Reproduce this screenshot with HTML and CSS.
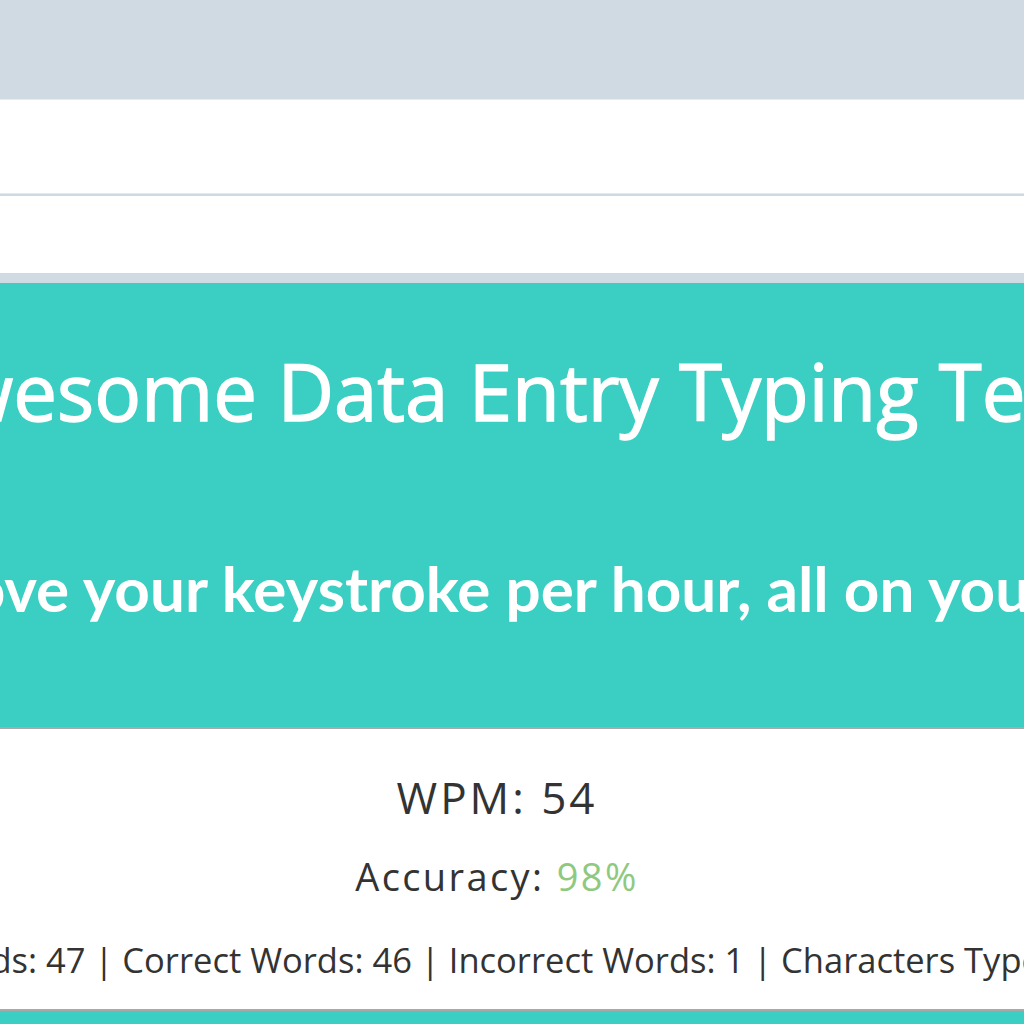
FILE: index.html
```html
<!DOCTYPE html>
<html lang="en">
<head>
<meta charset="utf-8">
<title>Awesome Data Entry Typing Test</title>
<link rel="stylesheet" href="styles.css">
</head>
<body>
  <header class="topbar"></header>
  <section class="panel">
    <div class="panel-row panel-row-first"></div>
    <div class="panel-divider"></div>
    <div class="panel-row panel-row-second"></div>
  </section>
  <div class="spacer"></div>
  <section class="hero">
    <div class="line title-line"><h1 class="title">Awesome Data Entry Typing Test</h1></div>
    <div class="line subtitle-line"><h3 class="subtitle">Improve your keystroke per hour, all on your own.</h3></div>
  </section>
  <section class="results">
    <div class="line"><p class="wpm">WPM: 54</p></div>
    <div class="line"><p class="accuracy">Accuracy: <span class="good">98%</span></p></div>
    <div class="line counts-line"><p class="counts">Total Words: 47 | Correct Words: 46 | Incorrect Words: 1 | Characters Typed: 262</p></div>
  </section>
  <footer class="footer"></footer>
</body>
</html>
```
FILE: styles.css
```css
html, body {
  margin: 0;
  padding: 0;
}
body {
  background: #ffffff;
  font-family: "Open Sans", "Liberation Sans", sans-serif;
  color: #333333;
  overflow: hidden;
  height: 1024px;
}
.topbar {
  height: 99px;
  background: #d0dae3;
  border-bottom: 1px solid #e6ecf1;
}
.panel {
  background: #ffffff;
}
.panel-row-first {
  height: 93px;
}
.panel-divider {
  height: 2px;
  border-top: 1px solid #e2e8ee;
  background: #d0dae3;
}
.panel-row-second {
  height: 77px;
}
.spacer {
  height: 10px;
  background: #d0dae3;
}
.line {
  display: flex;
  justify-content: center;
  padding-right: 30px;
  white-space: nowrap;
}
.hero {
  background: #3bcec3;
  box-sizing: border-box;
  padding-top: 62px;
  border-bottom: 2px solid #a9a9a9;
  height: 446px;
}
.title {
  margin: 0;
  font-weight: 400;
  font-size: 78px;
  line-height: 1.2;
  color: #ffffff;
  -webkit-text-stroke: 1.4px #ffffff;
}
.subtitle-line {
  margin-top: 112px;
  padding-right: 0;
  padding-left: 20px;
}
.subtitle {
  margin: 0;
  font-family: Lato, "Open Sans", sans-serif;
  font-weight: 700;
  font-size: 62px;
  line-height: 1.2;
  color: #ffffff;
}
.results {
  background: #ffffff;
  height: 282px;
  box-sizing: border-box;
  padding-top: 42px;
  border-bottom: 2px solid #a9a9a9;
}
.results p {
  margin: 0;
  line-height: 1.2;
}
.wpm {
  font-size: 44px;
  letter-spacing: 3px;
}
.accuracy {
  margin-top: 30px !important;
  font-size: 38px;
  letter-spacing: 2.4px;
}
.good {
  color: #8fc97f;
}
.counts-line {
  padding-right: 50px;
}
.counts {
  margin-top: 40px !important;
  font-size: 34.5px;
}
.footer {
  height: 100px;
  background: #3bcec3;
}
```
